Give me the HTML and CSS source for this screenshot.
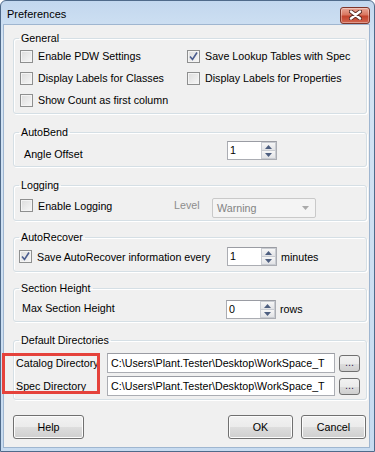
FILE: index.html
```html
<!DOCTYPE html>
<html lang="en">

<head>
    <meta charset="UTF-8">
    <title>Preferences</title>
    <link rel="stylesheet" href="styles.css">
</head>

<body>
    <div class="window">
        <div class="titlebar">
            <span class="title">Preferences</span>
            <div class="close">
                <svg width="13" height="10" viewBox="0 0 13 10">
                    <path d="M2 1.5 L11 8.5 M11 1.5 L2 8.5" stroke="#5a2a22" stroke-width="4.2" stroke-linecap="round" fill="none" />
                    <path d="M2 1.5 L11 8.5 M11 1.5 L2 8.5" stroke="#ffffff" stroke-width="2.4" stroke-linecap="round" fill="none" />
                </svg>
            </div>
        </div>

        <div class="client">
            <!-- General -->
            <fieldset class="group group-general">
                <legend>General</legend>
                <div class="options">
                    <div class="opt"><span class="check"></span>Enable PDW Settings</div>
                    <div class="opt"><span class="check checked"><svg width="11" height="11" viewBox="0 0 11 11"><path d="M2 5.5 L4.5 8.5 L9 1.5" stroke="#4b5d8f" stroke-width="1.6" fill="none" /></svg></span>Save Lookup Tables with Spec</div>
                    <div class="opt"><span class="check"></span>Display Labels for Classes</div>
                    <div class="opt"><span class="check"></span>Display Labels for Properties</div>
                    <div class="opt"><span class="check"></span>Show Count as first column</div>
                </div>
            </fieldset>

            <!-- AutoBend -->
            <fieldset class="group group-autobend">
                <legend>AutoBend</legend>
                <div class="line">
                    <span class="label label-angle">Angle Offset</span>
                    <div class="spin spin-angle">
                        <span class="spin-value">1</span>
                        <div class="spin-btns">
                            <span class="spin-btn"><svg width="7" height="4" viewBox="0 0 7 4"><path d="M0 4 L3.5 0 L7 4 Z" fill="#4e5f80" /></svg></span>
                            <span class="spin-btn"><svg width="7" height="4" viewBox="0 0 7 4"><path d="M0 0 L7 0 L3.5 4 Z" fill="#4e5f80" /></svg></span>
                        </div>
                    </div>
                </div>
            </fieldset>

            <!-- Logging -->
            <fieldset class="group group-logging">
                <legend>Logging</legend>
                <div class="line">
                    <div class="opt opt-logging"><span class="check"></span>Enable Logging</div>
                    <span class="label label-level">Level</span>
                    <div class="combo">
                        <span>Warning</span>
                        <svg width="7" height="4" viewBox="0 0 7 4"><path d="M0 0 L7 0 L3.5 4 Z" fill="#a9a9a9" /></svg>
                    </div>
                </div>
            </fieldset>

            <!-- AutoRecover -->
            <fieldset class="group group-recover">
                <legend>AutoRecover</legend>
                <div class="line">
                    <div class="opt opt-recover"><span class="check checked"><svg width="11" height="11" viewBox="0 0 11 11"><path d="M2 5.5 L4.5 8.5 L9 1.5" stroke="#4b5d8f" stroke-width="1.6" fill="none" /></svg></span>Save AutoRecover information every</div>
                    <div class="spin spin-recover">
                        <span class="spin-value">1</span>
                        <div class="spin-btns">
                            <span class="spin-btn"><svg width="7" height="4" viewBox="0 0 7 4"><path d="M0 4 L3.5 0 L7 4 Z" fill="#4e5f80" /></svg></span>
                            <span class="spin-btn"><svg width="7" height="4" viewBox="0 0 7 4"><path d="M0 0 L7 0 L3.5 4 Z" fill="#4e5f80" /></svg></span>
                        </div>
                    </div>
                    <span class="label unit">minutes</span>
                </div>
            </fieldset>

            <!-- Section Height -->
            <fieldset class="group group-section">
                <legend>Section Height</legend>
                <div class="line">
                    <span class="label label-section">Max Section Height</span>
                    <div class="spin spin-section">
                        <span class="spin-value">0</span>
                        <div class="spin-btns">
                            <span class="spin-btn"><svg width="7" height="4" viewBox="0 0 7 4"><path d="M0 4 L3.5 0 L7 4 Z" fill="#4e5f80" /></svg></span>
                            <span class="spin-btn"><svg width="7" height="4" viewBox="0 0 7 4"><path d="M0 0 L7 0 L3.5 4 Z" fill="#4e5f80" /></svg></span>
                        </div>
                    </div>
                    <span class="label unit">rows</span>
                </div>
            </fieldset>

            <!-- Default Directories -->
            <fieldset class="group group-dirs">
                <legend>Default Directories</legend>
                <div class="dir-row dir-catalog">
                    <span class="label label-dir">Catalog Directory</span>
                    <div class="textbox">C:\Users\Plant.Tester\Desktop\WorkSpace_T</div>
                    <div class="browse">...</div>
                </div>
                <div class="dir-row dir-spec">
                    <span class="label label-dir">Spec Directory</span>
                    <div class="textbox">C:\Users\Plant.Tester\Desktop\WorkSpace_T</div>
                    <div class="browse">...</div>
                </div>
            </fieldset>

            <div class="actions">
                <div class="btn btn-help">Help</div>
                <div class="btn btn-ok">OK</div>
                <div class="btn btn-cancel">Cancel</div>
            </div>
        </div>

        <div class="annotation"></div>
    </div>
</body>

</html>
```

FILE: styles.css
```css
* {
    box-sizing: border-box;
}

body {
    margin: 0;
    font-family: "Liberation Sans", Arial, sans-serif;
    font-size: 10.7px;
    color: #000;
    background-color: white;
}

.window {
    position: relative;
    width: 375px;
    height: 452px;
    display: flex;
    flex-direction: column;
    border: 1px solid #4f6a8a;
    border-radius: 6px 6px 0 0;
    background: linear-gradient(#c2d7ee, #d4e4f4 40px, #c7dbf0);
}

.titlebar {
    height: 24px;
    display: flex;
    align-items: center;
    padding-left: 6px;
}

.title {
    flex: 1;
    font-size: 11px;
    padding-top: 2px;
}

.close {
    width: 30px;
    height: 17px;
    margin-right: 4px;
    margin-top: 4px;
    display: flex;
    justify-content: center;
    align-items: center;
    border: 1px solid #7e352a;
    border-radius: 3px;
    background: linear-gradient(#e9a797, #d97760 45%, #c4432c 55%, #d16650);
    box-shadow: inset 0 0 0 1px rgba(255, 255, 255, 0.35);
}

.client {
    flex: 1;
    margin: 0 5px 4px 3px;
    background-color: #f0f0f0;
    box-shadow: 0 0 0 1px #9fb6d0;
    display: flex;
    flex-direction: column;
}

.group {
    margin: 0 2px 0 9px;
    padding: 0;
    border: 1px solid #d5dfe5;
    border-radius: 3px;
    box-shadow: inset 1px 1px 0 #fff, 1px 1px 0 #fff;
    min-width: 0;
}

.group legend {
    margin-left: 5px;
    padding: 0 2px;
    line-height: 14px;
}

.group-general { margin-top: 6px; }
.group-autobend { margin-top: 11px; }
.group-logging { margin-top: 11px; }
.group-recover { margin-top: 9px; }
.group-section { margin-top: 9px; }
.group-dirs { margin-top: 11px; }

.options {
    display: grid;
    grid-template-columns: 167px 1fr;
    padding: 0 0 2px 6px;
}

.opt {
    height: 22px;
    display: flex;
    align-items: center;
    gap: 5px;
    white-space: nowrap;
}

.check {
    width: 13px;
    height: 13px;
    flex: none;
    display: flex;
    justify-content: center;
    align-items: center;
    border: 1px solid #8e8f8f;
    background: linear-gradient(135deg, #dcdcdc, #f7f7f7);
    box-shadow: inset 0 0 0 1px #f4f4f4;
}

.line {
    display: flex;
    align-items: flex-start;
    white-space: nowrap;
}

.label {
    line-height: 14px;
}

/* AutoBend */
.group-autobend .line { height: 27px; }
.label-angle { margin: 8px 0 0 10px; width: 203px; }
.spin-angle { margin-top: 2px; }

/* Logging */
.group-logging .line { height: 28px; }
.opt-logging { height: 13px; margin: 7px 0 0 6px; width: 154px; }
.label-level { margin-top: 6px; width: 38px; color: #8d8d8d; }

.combo {
    margin-top: 6px;
    width: 104px;
    height: 20px;
    display: flex;
    align-items: center;
    justify-content: space-between;
    padding: 0 6px 0 4px;
    border: 1px solid #c9c9c9;
    border-radius: 2px;
    background-color: #f4f4f4;
    color: #838383;
}

/* AutoRecover */
.group-recover .line { height: 27px; }
.opt-recover { height: 13px; margin: 6px 0 0 5px; width: 208px; }
.spin-recover { margin-top: 3px; }

.unit {
    margin: 6px 0 0 4px;
}

/* Section Height */
.group-section .line { height: 26px; }
.label-section { margin: 6px 0 0 8px; width: 204px; }
.spin-section { margin-top: 5px; }
.group-section .unit { margin-top: 7px; }

.spin {
    width: 50px;
    height: 19px;
    display: flex;
    border: 1px solid #abadb3;
    border-top-color: #9a9ca3;
    background-color: white;
}

.spin-value {
    flex: 1;
    padding-left: 2px;
    line-height: 17px;
}

.spin-btns {
    width: 15px;
    display: flex;
    flex-direction: column;
}

.spin-btn {
    flex: 1;
    display: flex;
    justify-content: center;
    align-items: center;
    border: 1px solid #c9ccd2;
    background: linear-gradient(#f6f6f6, #e2e3e6);
}

.spin-btn + .spin-btn {
    border-top: none;
}

/* Default Directories */
.group-dirs {
    padding: 6px 0 3px 0;
}

.dir-row {
    display: flex;
    align-items: center;
    height: 20px;
    white-space: nowrap;
}

.dir-row + .dir-row {
    margin-top: 3px;
}

.label-dir {
    width: 91px;
    margin-left: 2px;
}

.textbox {
    width: 228px;
    height: 20px;
    padding-left: 3px;
    line-height: 18px;
    overflow: hidden;
    border: 1px solid #abadb3;
    border-top-color: #9a9ca3;
    background-color: white;
}

.browse {
    width: 21px;
    height: 17px;
    margin-left: 4px;
    text-align: center;
    line-height: 12px;
    border: 1px solid #707070;
    border-radius: 3px;
    background: linear-gradient(#f2f2f2, #ebebeb 50%, #dddddd 51%, #cfcfcf);
    color: #3a2a55;
}

/* Bottom buttons */
.actions {
    display: flex;
    margin: 15px 3px 0 9px;
}

.btn {
    width: 71px;
    height: 24px;
    display: flex;
    justify-content: center;
    align-items: center;
    border: 1px solid #707070;
    border-radius: 3px;
    background: linear-gradient(#f2f2f2, #ebebeb 50%, #dddddd 51%, #cfcfcf);
    box-shadow: inset 0 0 0 1px #fcfcfc;
}

.btn-ok {
    width: 65px;
    margin-left: auto;
}

.btn-cancel {
    width: 65px;
    margin-left: 8px;
}

/* Red highlight drawn over the dialog */
.annotation {
    position: absolute;
    left: 1px;
    top: 352px;
    width: 98px;
    height: 41px;
    border: 3px solid #e5423b;
}
```
